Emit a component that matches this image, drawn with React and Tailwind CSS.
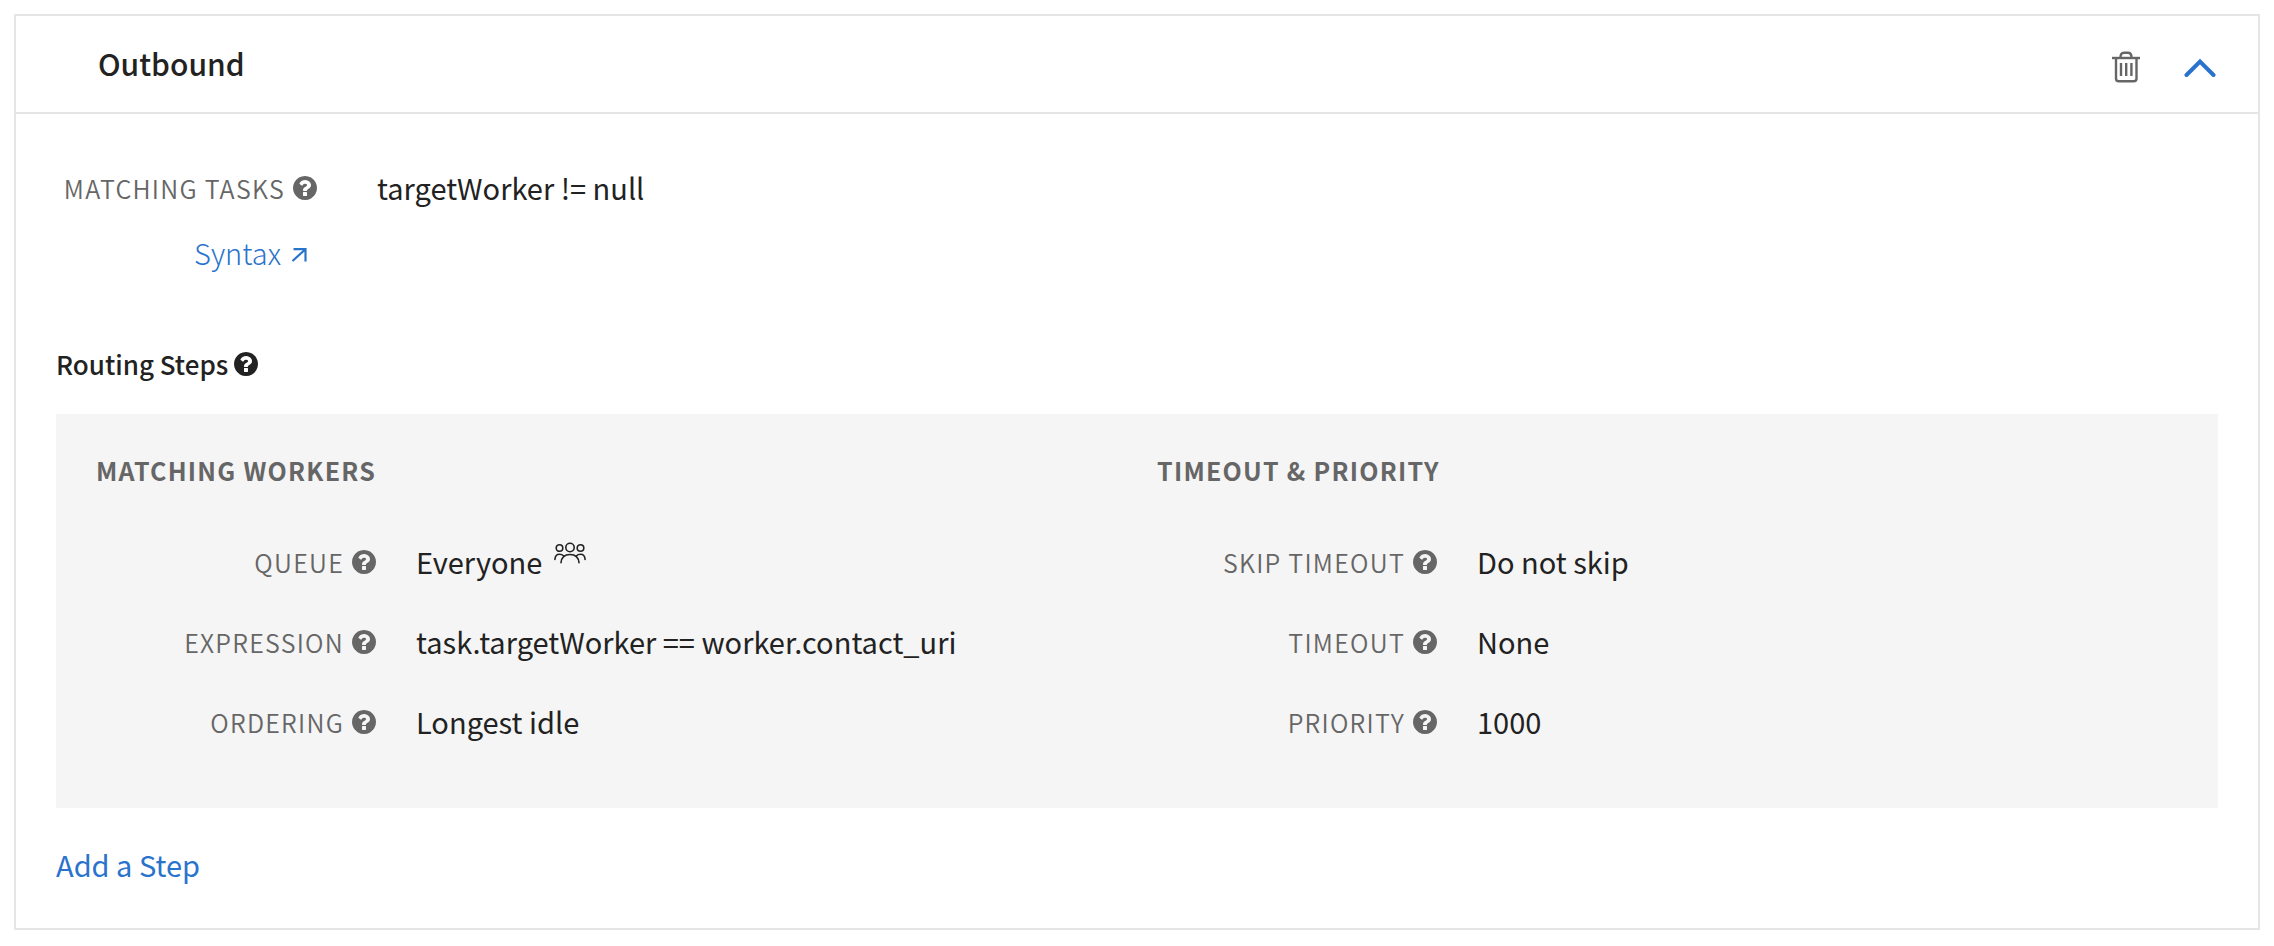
const HELP_PATH =
  "M1024 1376v-192q0-14-9-23t-23-9h-192q-14 0-23 9t-9 23v192q0 14 9 23t23 9h192q14 0 23-9t9-23zM1280 704q0-88-55.5-163t-138.5-116-170-41q-243 0-371 213-15 24 8 42l132 100q7 6 19 6 16 0 25-12 53-68 86-92 34-24 86-24 48 0 85.5 26t37.5 59q0 38-20 61t-68 45q-63 28-115.5 86.5t-52.5 125.5v36q0 14 9 23t23 9h192q14 0 23-9t9-23q0-19 21.5-49.5t54.5-49.5q32-18 49-28.5t46-35 44.5-48 28-60.5 12.5-81zM1664 896q0 209-103 385.5t-279.5 279.5-385.5 103-385.5-103-279.5-279.5-103-385.5 103-385.5 279.5-279.5 385.5-103 385.5 103 279.5 279.5 103 385.5z";

function Help({ topic }) {
  return (
    <button type="button" aria-label={"Help: " + topic} className="shrink-0">
      <svg viewBox="128 128 1536 1536" className="size-6" fill="currentColor" aria-hidden="true">
        <path d={HELP_PATH} />
      </svg>
    </button>
  );
}

function TrashIcon() {
  return (
    <svg viewBox="0 0 28 32" className="h-8 w-7" fill="none" stroke="currentColor" strokeWidth="2.4" aria-hidden="true">
      <path d="M0 7H28" />
      <path d="M8.500 6.500C8.500 3.500 9.500 1.800 12 1.800H16C18.500 1.800 19.500 3.500 19.500 6.500" />
      <path d="M4 7V27.500Q4 30.300 6.800 30.300H21.700Q24.500 30.300 24.500 27.500V7" />
      <path d="M9 12V25M14.200 12V25M19.400 12V25" />
    </svg>
  );
}

function ChevronUpIcon() {
  return (
    <svg viewBox="0 0 32 20" className="h-5 w-8" fill="none" stroke="currentColor" strokeWidth="4" strokeLinecap="round" aria-hidden="true">
      <path d="M2.500 17L16 3.500L29.500 17" />
    </svg>
  );
}

function PeopleIcon() {
  return (
    <svg viewBox="0 0 32 22" className="h-[22px] w-8" fill="none" stroke="currentColor" strokeWidth="1.6" strokeLinecap="round" aria-hidden="true">
      <circle cx="16" cy="5.500" r="4.200" />
      <circle cx="5.500" cy="6" r="3.300" />
      <circle cx="26.500" cy="6" r="3.300" />
      <path d="M7 20.800C7.500 15 11 12.500 16 12.500S24.500 15 25 20.800" />
      <path d="M.9 17.500C1.200 13.500 3 12.300 5.500 12.300Q8 12.300 9.500 13.800" />
      <path d="M31.100 17.500C30.800 13.500 29 12.300 26.500 12.300Q24 12.300 22.500 13.800" />
    </svg>
  );
}

function ArrowIcon() {
  return (
    <svg viewBox="0 0 16 14" className="mt-1.5 h-3.5 w-4" fill="none" stroke="currentColor" strokeWidth="2.2" aria-hidden="true">
      <path d="M2.500 1.200H14.500V13.500M14.200 1.500L1.500 13" />
    </svg>
  );
}

function Label({ children }) {
  return (
    <dt className="flex w-70 shrink-0 items-center justify-end gap-2 text-[25px] leading-10 font-[350] tracking-wider text-[#666]">
      {children}
      <Help topic={children} />
    </dt>
  );
}

function StepColumn({ title, rows }) {
  return (
    <section>
      <h3 className="text-[25px] leading-8 font-bold tracking-wider text-[#666]">{title}</h3>
      <dl className="mt-14 flex flex-col gap-10">
        {rows.map((row) => (
          <div key={row.label} className="flex gap-10">
            <Label>{row.label}</Label>
            <dd className="flex gap-3 text-[29px] leading-[38px]">
              {row.value}
              {row.people && <PeopleIcon />}
            </dd>
          </div>
        ))}
      </dl>
    </section>
  );
}

const WORKERS = [
  { label: "QUEUE", value: "Everyone", people: true },
  { label: "EXPRESSION", value: "task.targetWorker == worker.contact_uri" },
  { label: "ORDERING", value: "Longest idle" },
];

const TIMING = [
  { label: "SKIP TIMEOUT", value: "Do not skip" },
  { label: "TIMEOUT", value: "None" },
  { label: "PRIORITY", value: "1000" },
];

export default function App() {
  return (
    <main className="bg-white p-3.5 font-['Noto_Sans_CJK_SC','Open_Sans',sans-serif] text-[#222]">
      <article className="border-2 border-[#e5e5e5]">
        <header className="flex h-[98px] items-center justify-between border-b-2 border-[#e5e5e5] pr-[42px] pl-[82px]">
          <h1 className="pb-0.5 text-[30px] leading-10 font-medium">Outbound</h1>
          <div className="flex items-center gap-11 pt-1.5">
            <button type="button" aria-label="Delete filter" className="text-[#666]">
              <TrashIcon />
            </button>
            <button type="button" aria-label="Collapse filter" className="pt-0.5 text-[#2a73cc]">
              <ChevronUpIcon />
            </button>
          </div>
        </header>

        <div className="px-10 pt-[54px] pb-11">
          <div className="flex gap-15">
            <div className="flex w-[261px] flex-col gap-6">
              <div className="flex items-center justify-end gap-2 text-[25px] leading-10 font-[350] tracking-wider whitespace-nowrap text-[#666]">
                MATCHING TASKS
                <Help topic="Matching tasks" />
              </div>
              <a href="#syntax" className="flex items-center gap-2.5 self-end pr-2.5 text-[29px] leading-10 font-light text-[#2a73cc]">
                Syntax
                <ArrowIcon />
              </a>
            </div>
            <p className="text-[29px] leading-[38px]">targetWorker != null</p>
          </div>

          <h2 className="mt-18 flex items-center gap-1.5 text-[26px] leading-10 font-medium">
            Routing Steps
            <Help topic="Routing steps" />
          </h2>

          <div className="mt-7.5 grid grid-cols-2 bg-[#f5f5f5] pt-10 pb-[66px] pl-10">
            <StepColumn title="MATCHING WORKERS" rows={WORKERS} />
            <StepColumn title="TIMEOUT & PRIORITY" rows={TIMING} />
          </div>

          <button type="button" className="mt-9 block text-[29px] leading-10 text-[#2a73cc]">
            Add a Step
          </button>
        </div>
      </article>
    </main>
  );
}
